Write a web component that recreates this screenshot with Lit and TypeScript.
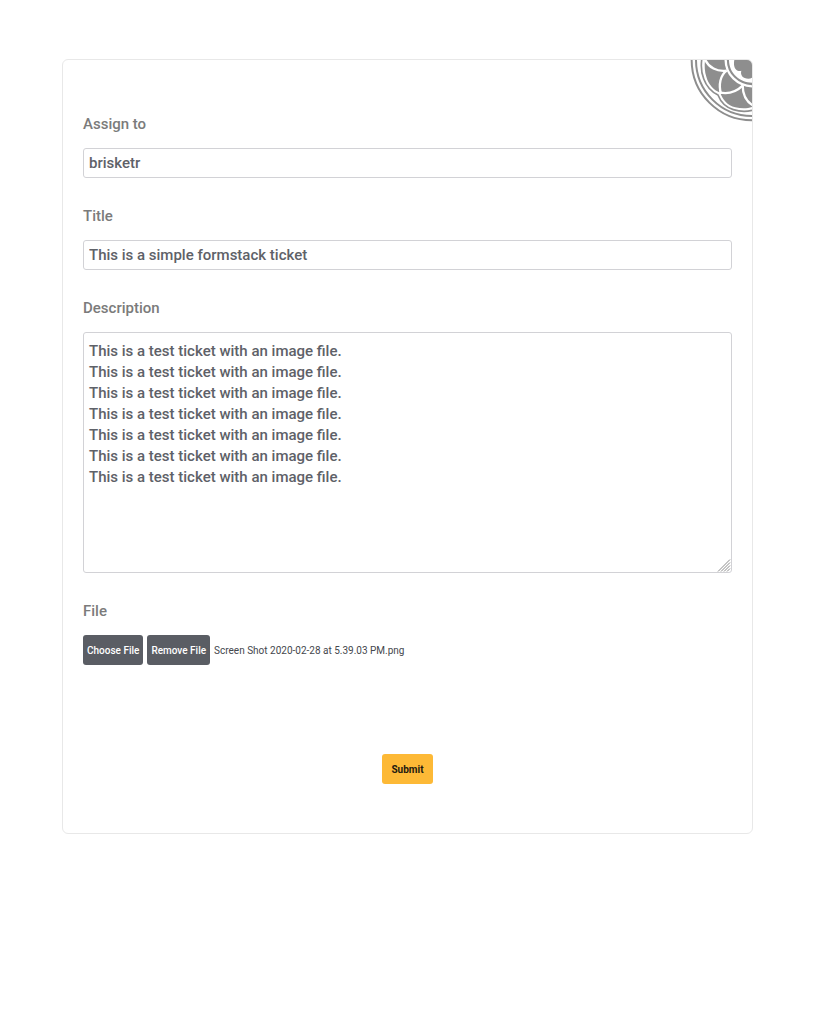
import { LitElement, html, css } from "lit";
import { customElement } from "lit/decorators.js";

const LINE = "This is a test ticket with an image file.";

@customElement("rose-ornament")
class RoseOrnament extends LitElement {
  static styles = css`
    :host {
      display: block;
      width: 62px;
      height: 62px;
    }
    svg {
      display: block;
      width: 100%;
      height: 100%;
    }
  `;

  render() {
    return html`
      <svg viewBox="0 0 186 186" fill="none" aria-hidden="true">
        <g stroke="#8e8e8e">
          <circle cx="186" cy="0" r="181" stroke-width="6" />
          <circle cx="186" cy="0" r="168" stroke-width="6" />
          <path
            stroke-width="5"
            d="M35 0 C33 18 35 42 41 56 C49 78 66 96 84 105 C92 126 108 142 130 149 C150 155 170 155 186 151"
          />
        </g>
        <path
          fill="#8e8e8e"
          d="M45 0 C43 18 44 36 49 50 C55 72 70 90 91 98 C97 118 112 136 136 142 C154 146 172 146 186 141 V0 Z"
        />
        <g stroke="#fff" stroke-width="7">
          <path d="M46 0 C56 22 80 36 110 32" />
          <path d="M110 32 C91 46 85 74 93 102" />
          <path d="M88 97 C112 103 138 96 159 76" />
          <path d="M158 76 C158 102 168 124 188 136" />
          <path d="M107 0 C107 43 142 78 188 79" />
        </g>
        <path
          fill="#fff"
          d="M117 0 H133 C130 14 133 28 143 32 C148 34 151 33 154 32 C151 42 156 51 164 54 C172 57 180 57 186 53 V68 C150 68 117 40 117 0 Z"
        />
      </svg>
    `;
  }
}

@customElement("app-root")
class AppRoot extends LitElement {
  static styles = css`
    :host {
      display: block;
      padding: 59px 62px;
      font-family: Roboto, "Liberation Sans", sans-serif;
      font-weight: 500;
      color: #5e6168;
    }
    * {
      box-sizing: border-box;
    }
    .card {
      position: relative;
      display: flex;
      flex-direction: column;
      gap: 28px;
      padding: 54px 20px 49px;
      border: 1px solid #e8e8e8;
      border-radius: 6px;
      overflow: hidden;
    }
    .ornament {
      position: absolute;
      top: 0;
      right: 0;
    }
    .field {
      display: flex;
      flex-direction: column;
      gap: 14px;
    }
    .label {
      font-size: 15px;
      line-height: 20px;
      color: #7b7b7b;
    }
    .control {
      display: block;
      width: 100%;
      margin: 0;
      border: 1px solid #d2d2d6;
      border-radius: 3px;
      background: #fff;
      color: inherit;
      font: inherit;
      font-size: 15px;
      outline: none;
    }
    .line {
      height: 30px;
      padding: 0 5px;
    }
    .area {
      position: relative;
    }
    .text {
      height: 241px;
      padding: 8px 5px;
      line-height: 21px;
      resize: none;
    }
    .grip {
      position: absolute;
      right: 1px;
      bottom: 1px;
      width: 14px;
      height: 14px;
    }
    .files {
      display: flex;
      align-items: center;
      gap: 4px;
      font-size: 10px;
      font-weight: 400;
    }
    .button {
      height: 30px;
      padding: 0 4px;
      border: 0;
      border-radius: 3px;
      background: #5a5d64;
      color: #fff;
      font-family: inherit;
      font-size: 10px;
      font-weight: 500;
    }
    .name {
      color: #44474d;
    }
    .submit {
      align-self: center;
      margin-top: 61px;
      padding: 0 9px;
      background: #fdb936;
      color: #1f1a10;
      font-weight: 700;
    }
  `;

  render() {
    return html`
      <form class="card" @submit=${(e: Event) => e.preventDefault()}>
        <rose-ornament class="ornament"></rose-ornament>
        <div class="field">
          <label class="label" for="assign">Assign to</label>
          <input class="control line" id="assign" type="text" value="brisketr" />
        </div>
        <div class="field">
          <label class="label" for="title">Title</label>
          <input class="control line" id="title" type="text" value="This is a simple formstack ticket" />
        </div>
        <div class="field">
          <label class="label" for="description">Description</label>
          <div class="area">
            <textarea
              class="control text"
              id="description"
              spellcheck="false"
              .value=${Array(7).fill(LINE).join("\n")}
            ></textarea>
            <svg class="grip" viewBox="0 0 14 14" stroke="#8a8a8a" aria-hidden="true">
              <path d="M1 13.5L13 1.5M4 13.5L13 4.5M7 13.5L13 7.5M10 13.5L13 10.5" />
            </svg>
          </div>
        </div>
        <div class="field">
          <label class="label" for="choose">File</label>
          <div class="files">
            <button class="button" id="choose" type="button">Choose File</button>
            <button class="button" type="button">Remove File</button>
            <span class="name">Screen Shot 2020-02-28 at 5.39.03 PM.png</span>
          </div>
        </div>
        <button class="button submit" type="submit">Submit</button>
      </form>
    `;
  }
}
